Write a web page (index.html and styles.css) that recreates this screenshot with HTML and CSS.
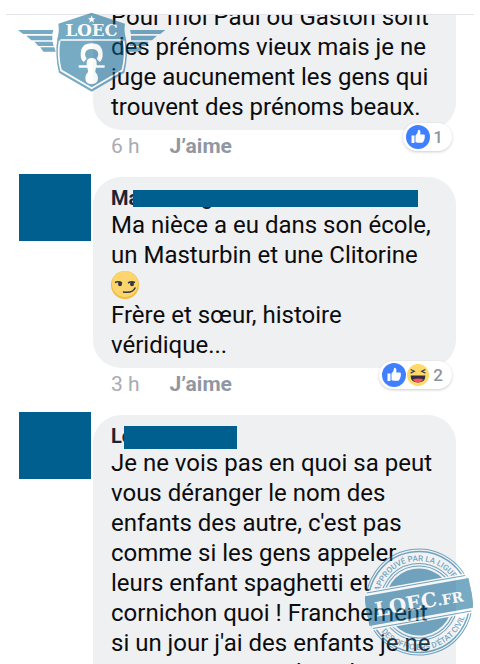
FILE: index.html
```
<!DOCTYPE html>
<html lang="fr">
<head>
    <meta charset="UTF-8">
    <meta name="viewport" content="width=device-width, initial-scale=1.0">
    <title>Commentaires</title>
    <link rel="stylesheet" href="styles.css">
</head>
<body>
    <main class="thread">
        <article class="comment first">
            <div class="avatar-slot"></div>
            <div class="content">
                <div class="bubble">
                    <p class="text">Pour moi Paul ou Gaston sont des prénoms vieux mais je ne juge aucunement les gens qui trouvent des prénoms beaux.</p>
                    <div class="reactions">
                        <svg class="reaction" viewBox="0 0 24 24"><use href="#like"/></svg>
                        <span>1</span>
                    </div>
                </div>
                <div class="meta">
                    <time>6 h</time>
                    <button type="button" class="like-btn">J’aime</button>
                </div>
            </div>
        </article>

        <article class="comment">
            <div class="avatar-slot"><div class="avatar"></div></div>
            <div class="content">
                <div class="bubble">
                    <h2 class="name">Ma<span class="name-rest">g</span><span class="mask mask-long"></span></h2>
                    <p class="text">Ma nièce a eu dans son école, un Masturbin et une Clitorine
                        <svg class="emoji" viewBox="0 0 28 28" role="img" aria-label="smirk">
                            <circle cx="14" cy="14" r="14" fill="#f2bd3c"/>
                            <circle cx="14" cy="13" r="13" fill="#fcd56f"/>
                            <path d="M4 11.500q3.500-1.500 7 .5M17 12q3.500-2 7-.5" fill="none" stroke="#2f3640" stroke-width="1.500"/>
                            <ellipse cx="9" cy="13" rx="2" ry="2.200" fill="#2f3640"/>
                            <ellipse cx="21" cy="13" rx="2" ry="2.200" fill="#2f3640"/>
                            <path d="M12.500 21q9 1.500 11.500-4" fill="none" stroke="#2f3640" stroke-width="1.600" stroke-linecap="round"/>
                        </svg><br>
                        Frère et sœur, histoire véridique...</p>
                    <div class="reactions">
                        <svg class="reaction" viewBox="0 0 24 24"><use href="#like"/></svg>
                        <svg class="reaction" viewBox="-1 -1 26 26"><use href="#haha" width="24" height="24"/></svg>
                        <span>2</span>
                    </div>
                </div>
                <div class="meta">
                    <time>3 h</time>
                    <button type="button" class="like-btn">J’aime</button>
                </div>
            </div>
        </article>

        <article class="comment">
            <div class="avatar-slot"><div class="avatar"></div></div>
            <div class="content">
                <div class="bubble">
                    <h2 class="name">Lo<span class="mask mask-short"></span></h2>
                    <p class="text">Je ne vois pas en quoi sa peut vous déranger le nom des enfants des autre, c'est pas comme si les gens appeler leurs enfant spaghetti et cornichon quoi ! Franchement si un jour j'ai des enfants je ne veux pas que sa dure des</p>
                </div>
            </div>
        </article>
    </main>

    <!-- Winged shield -->
    <svg class="badge" viewBox="51 36 447 243" role="img" aria-label="LOEC">
        <g fill="#005f8f">
            <path d="M54 90H160L157 102H69zM79 107H157V121H94zM103 125H158L161 138H115zM121 142H163L167 155H130z"/>
            <path d="M496 90H390L393 102H481zM471 107H393V121H456zM447 125H392L389 138H435zM429 142H387L383 155H420z"/>
            <path d="M275 38L375 71Q371 92 378 116Q386 165 373 218L275 275L177 218Q164 165 172 116Q179 92 175 71z"/>
        </g>
        <path d="M181 120H369M371 122Q379 165 367 211L275 265L183 211Q171 165 179 122" fill="none" stroke="#fff" stroke-width="5"/>
        <path d="M275 47l3 8h8l-6 5 2 8-7-5-7 5 2-8-6-5h8z" fill="#fff"/>
        <text class="badge-text" x="275" y="109" text-anchor="middle">LOEC</text>
        <path d="M251 186Q242 178 242 164Q242 130 275 130Q308 130 308 164Q308 178 299 186L290 176Q295 170 295 162Q293 147 275 147Q257 147 255 162Q255 170 260 176z" fill="#fff"/>
        <path d="M260 196V188Q260 174 275 174Q290 174 290 188V196H314V203H288Q286 210 286 216Q294 224 294 234Q294 252 275 252Q256 252 256 234Q256 224 264 216Q264 210 262 203H236V196z" fill="#fff"/>
    </svg>

    <!-- Round stamp -->
    <svg class="stamp" viewBox="0 0 108 108" role="img" aria-label="LOEC.FR">
        <defs>
            <path id="arc-top" d="M13 54A41 41 0 0 1 95 54"/>
            <path id="arc-bottom" d="M6 54A48 48 0 0 0 102 54"/>
        </defs>
        <g transform="rotate(-10 54 54)">
            <circle cx="54" cy="54" r="53" fill="#fff" fill-opacity=".3"/>
            <g fill="none" stroke="#005f8f">
                <circle cx="54" cy="54" r="53"/>
                <circle cx="54" cy="54" r="50.500" stroke-width="1.500"/>
                <circle cx="54" cy="54" r="38.500"/>
                <circle cx="54" cy="54" r="36"/>
            </g>
            <circle cx="54" cy="54" r="33.500" fill="#005f8f"/>
            <text class="ring-text"><textPath href="#arc-top" startOffset="50%" text-anchor="middle">APPROUVÉ PAR LA LIGUE</textPath></text>
            <text class="ring-text"><textPath href="#arc-bottom" startOffset="50%" text-anchor="middle">DES OFFICIERS D'ÉTAT CIVIL</textPath></text>
            <path d="M3 34H105V74H3z" fill="#fff"/>
            <path d="M4 36H104M4 72H104" stroke="#005f8f"/>
            <path d="M1 39H107V69H1z" fill="#005f8f"/>
            <text class="stamp-text" x="54" y="61" text-anchor="middle">LOEC<tspan class="stamp-small">.FR</tspan></text>
        </g>
    </svg>

    <!-- Reaction icons -->
    <svg class="sprites">
        <symbol id="like" viewBox="0 0 24 24">
            <circle cx="12" cy="12" r="12" fill="#4080ff"/>
            <path d="M5.500 10.500h3v7.500h-3zM9.500 10.500Q12 8.500 12 5.500Q12.500 4.500 13.500 5Q15 6 14.300 9.500H18Q19.500 10 18.700 11.800Q19.200 13 18.300 14Q18.500 15.300 17.600 16Q17.500 17.700 16 17.800H11.500L9.500 17z" fill="#fff"/>
        </symbol>
        <symbol id="haha" viewBox="0 0 24 24">
            <circle cx="12" cy="12" r="12" fill="#ffda6b"/>
            <path d="M4 6l4 2-4 2M20 6l-4 2 4 2" fill="none" stroke="#3b3b4a" stroke-width="1.300"/>
            <path d="M4 12.500H20Q20 20 12 20Q4 20 4 12.500z" fill="#2f3044"/>
            <path d="M6 17Q12 14.500 18 17Q16 20 12 20Q8 20 6 17z" fill="#f5516c"/>
        </symbol>
    </svg>
</body>
</html>
```
FILE: styles.css
```
* {
    margin: 0;
    padding: 0;
    box-sizing: border-box;
}

body {
    font-family: Roboto, "Liberation Sans", sans-serif;
    background: #fff;
    color: #0c0c0e;
    height: 100vh;
    padding: 14px 6px 0;
    position: relative;
    overflow: hidden;
}

.thread {
    height: 100%;
    border-top: 1px solid #e4e5ea;
    padding: 0 18px 0 13px;
    overflow: hidden;
}

.comment {
    display: flex;
    gap: 2px;
    margin-bottom: 12px;
}

/* the thread is scrolled part way into this one */
.first {
    margin-top: -26px;
}

.avatar-slot {
    width: 72px;
    flex: none;
}

.avatar {
    height: 67px;
    background: #005f8f;
}

.content {
    flex: 1;
    min-width: 0;
    padding-top: 3px;
}

.bubble {
    position: relative;
    background: #eff0f2;
    border-radius: 28px;
    padding: 10px 18px 8px;
}

.name {
    position: relative;
    font-size: 20px;
    line-height: 23px;
    font-weight: 700;
    color: #1d2433;
}

.name-rest {
    margin-left: 62px;
}

.mask {
    position: absolute;
    background: #005f8f;
}

.mask-long {
    left: 22px;
    right: 20px;
    top: 3px;
    height: 17px;
}

.mask-short {
    left: 13px;
    width: 113px;
    top: 1px;
    height: 23px;
}

.text {
    font-size: 24px;
    line-height: 30px;
}

.emoji {
    display: inline-block;
    width: 28px;
    height: 28px;
    vertical-align: -6px;
}

.reactions {
    position: absolute;
    right: 4px;
    bottom: -21px;
    display: flex;
    align-items: center;
    height: 28px;
    padding: 0 9px 0 3px;
    border-radius: 14px;
    background: #fff;
    box-shadow: 0 1px 3px rgba(0, 0, 0, 0.2);
    font-size: 17px;
    font-weight: 500;
    color: #8d949e;
}

.reactions span {
    margin-left: 3px;
}

.reaction {
    width: 24px;
    height: 24px;
}

.meta {
    display: flex;
    align-items: center;
    gap: 30px;
    height: 32px;
    padding-left: 18px;
    font-size: 21px;
    color: #a9abb0;
}

.like-btn {
    border: none;
    background: none;
    font: inherit;
    font-weight: 700;
    color: #9097a3;
    cursor: pointer;
}

.badge {
    position: absolute;
    left: 17px;
    top: 12px;
    width: 149px;
    height: 81px;
    opacity: 0.53;
}

.badge-text {
    font-family: "DejaVu Serif", serif;
    font-size: 50px;
    font-weight: 700;
    fill: #fff;
}

.stamp {
    position: absolute;
    right: 7px;
    bottom: 8px;
    width: 108px;
    height: 108px;
    opacity: 0.53;
}

.ring-text {
    font-family: Roboto, sans-serif;
    font-size: 8px;
    font-weight: 500;
    fill: #005f8f;
}

.stamp-text {
    font-family: "DejaVu Serif", serif;
    font-size: 20px;
    font-weight: 700;
    fill: #fff;
}

.stamp-small {
    font-size: 14px;
}

.sprites {
    display: none;
}
```
